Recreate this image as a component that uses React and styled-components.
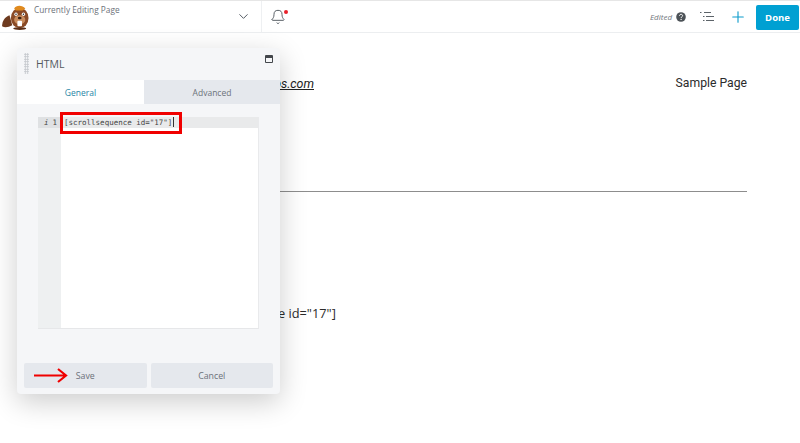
import React from 'react'
import styled, { createGlobalStyle } from 'styled-components'
import { ChevronDown, Bell, Plus } from 'lucide-react'

const Global = createGlobalStyle`
  html, body {
    margin: 0;
    padding: 0;
    background: #fff;
    font-family: "Open Sans", "Liberation Sans", sans-serif;
    overflow: hidden;
  }
`

const Page = styled.div`
  position: relative;
  width: 800px;
  height: 443px;
  overflow: hidden;
`

const TopBar = styled.header`
  height: 31px;
  display: flex;
  align-items: stretch;
  border-top: 1px solid #e6e6e6;
  border-bottom: 1px solid #eceef0;
  box-sizing: content-box;
`

const Brand = styled.div`
  width: 261px;
  display: flex;
  border-right: 1px solid #eef0f2;
  position: relative;
`

const Logo = styled.svg`
  width: 28px;
  height: 26px;
  margin: 3px 0 0 2px;
  flex: none;
`

const BrandLabel = styled.div`
  flex: 1;
  margin: 3px 0 0 4px;
  font-size: 8.3px;
  line-height: 12px;
  color: #6c7179;
`

const Caret = styled.div`
  display: flex;
  align-items: center;
  margin-right: 10px;
  color: #565d65;
`

const BellWrap = styled.div`
  position: relative;
  width: 18px;
  height: 18px;
  margin: 7px 0 0 8px;
  color: #4f565d;
`

const Dot = styled.span`
  position: absolute;
  top: 2px;
  right: 0;
  width: 4px;
  height: 4px;
  border-radius: 50%;
  background: #e8202a;
`

const Actions = styled.div`
  margin-left: auto;
  display: flex;
  align-items: center;
  padding-right: 1px;
`

const Edited = styled.span`
  font-size: 8px;
  font-style: italic;
  color: #72777d;
  margin-right: 4px;
`

const ListIcon = styled.svg`
  margin: 0 15px 0 14px;
`

const DoneButton = styled.button`
  width: 43px;
  height: 25px;
  margin-left: 9px;
  margin-top: 1px;
  border: 0;
  border-radius: 2px;
  background: #00a0d2;
  color: #fff;
  font: 700 9.5px "Open Sans", sans-serif;
  padding: 0;
`

const Content = styled.main`
  padding: 0 53px;
  color: #2b2b2b;
  font-family: Roboto, "Open Sans", sans-serif;
`

const SiteHeader = styled.div`
  display: flex;
  justify-content: space-between;
  align-items: center;
  padding-top: 40px;
  height: 20px;
`

const SiteTitle = styled.a`
  width: 261px;
  text-align: right;
  font-size: 12.4px;
  font-style: italic;
  text-decoration: underline;
  color: #222;
`

const NavLink = styled.span`
  font-size: 12.2px;
  color: #2b2b2b;
`

const Rule = styled.hr`
  border: 0;
  border-top: 1px solid #8d8d8d;
  margin: 98px 0 0;
`

const Shortcode = styled.p`
  margin: 112px 0 0 139px;
  font-family: "Open Sans", sans-serif;
  font-size: 12.8px;
  line-height: 18px;
  color: #2b2b2b;
`

const Panel = styled.section`
  position: absolute;
  left: 17px;
  top: 48px;
  width: 263px;
  height: 346px;
  display: flex;
  flex-direction: column;
  background: #f5f6f8;
  border-radius: 4px;
  box-shadow: 0 8px 28px rgba(0, 0, 0, 0.2);
`

const PanelHead = styled.div`
  height: 32px;
  display: flex;
  align-items: center;
  position: relative;
  padding-left: 19px;
  font-size: 10.5px;
  color: #54595f;
`

const Grip = styled.span`
  position: absolute;
  left: 7px;
  top: 5px;
  width: 5px;
  height: 21px;
  background-image: radial-gradient(#c3c7cc 1px, transparent 1px);
  background-size: 2.5px 2.5px;
`

const MaxIcon = styled.span`
  position: absolute;
  right: 7px;
  top: 7px;
  width: 6px;
  height: 4px;
  border: 1px solid #43474c;
  border-top-width: 3px;
  border-radius: 1px;
`

const Tabs = styled.div`
  height: 24px;
  display: flex;
`

const Tab = styled.div`
  width: ${p => (p.$active ? '127px' : '136px')};
  display: flex;
  align-items: center;
  justify-content: center;
  font-size: 8.5px;
  background: ${p => (p.$active ? '#fff' : '#e5e8ed')};
  color: ${p => (p.$active ? '#1f86a6' : '#6c727a')};
`

const EditorArea = styled.div`
  position: relative;
  flex: 1;
  margin: 13px 21px 34px 21px;
  display: flex;
  border-bottom: 1px solid #e6e7e9;
  border-right: 1px solid #e9eaec;
  background: #fff;
`

const Gutter = styled.div`
  width: 23px;
  background: #eef0f1;
`

const GutterLine = styled.div`
  height: 11px;
  background: #dfe1e3;
  font: 7.5px/11px "DejaVu Sans Mono", monospace;
  color: #444;
  display: flex;
  justify-content: space-between;
  padding: 0 4px 0 6px;
`

const CodeCol = styled.div`
  flex: 1;
`

const CodeLine = styled.div`
  height: 11px;
  padding-left: 3px;
  background: #e9eaeb;
  font: 7.5px/11px "DejaVu Sans Mono", monospace;
  color: #444;
  white-space: pre;
`

const Cursor = styled.span`
  display: inline-block;
  width: 1px;
  height: 10px;
  margin-left: 1px;
  vertical-align: top;
  background: #333;
`

const Highlight = styled.div`
  position: absolute;
  left: 22px;
  top: -5px;
  width: 122px;
  height: 22px;
  box-sizing: border-box;
  border: 3px solid #f00000;
`

const ButtonRow = styled.div`
  position: relative;
  display: flex;
  gap: 4px;
  padding: 0 7px 6px;
`

const PanelButton = styled.button`
  flex: 1;
  height: 25px;
  border: 0;
  border-radius: 2px;
  background: #e5e8ed;
  color: #6c717a;
  font: 500 8.8px "Open Sans", sans-serif;
  padding: 0;
`

const Arrow = styled.svg`
  position: absolute;
  left: 17px;
  top: 5px;
`

const BeaverLogo = () => (
  <Logo viewBox="0 0 30 28">
    <path d="M0 24c0-6 3-10 8-12l3 11c-4 2-8 3-11 1z" fill="#6e3b1f" />
    <ellipse cx="19" cy="15" rx="9.5" ry="11" fill="#8a4a26" />
    <path d="M13 5c2-4 9-4 12 0l-3 2h-7z" fill="#e08a1e" />
    <circle cx="15" cy="11" r="1.8" fill="#fff" />
    <circle cx="23" cy="11" r="1.8" fill="#fff" />
    <circle cx="15" cy="11" r="0.8" fill="#222" />
    <circle cx="23" cy="11" r="0.8" fill="#222" />
    <ellipse cx="19" cy="17" rx="6" ry="5" fill="#c98d5e" />
    <rect x="16.5" y="18" width="5" height="6" rx="1" fill="#fff" />
    <ellipse cx="19" cy="15" rx="2" ry="1.3" fill="#3a1e10" />
    <ellipse cx="19" cy="26.5" rx="7" ry="1.5" fill="#5c2f17" />
  </Logo>
)

const HelpIcon = () => (
  <svg width="10" height="10" viewBox="0 0 10 10">
    <circle cx="5" cy="5" r="4.8" fill="#4c5257" />
    <path d="M3.5 3.8c0-2 3.1-2 3.1-.1 0 1.1-1.5 1.1-1.5 2.3" fill="none" stroke="#fff" strokeWidth="1" />
    <circle cx="5.1" cy="7.4" r=".65" fill="#fff" />
  </svg>
)

const OutlineIcon = () => (
  <ListIcon width="14" height="11" viewBox="0 0 14 11" fill="none" stroke="#5c6369" strokeWidth="1">
    <path d="M0 1.5h1.5M4 1.5h7M3 5.5h1.5M6 5.5h8M3 9.5h1.5M6 9.5h8" />
  </ListIcon>
)

export default function App() {
  return (
    <Page>
      <Global />
      <TopBar>
        <Brand>
          <BeaverLogo />
          <BrandLabel>Currently Editing Page</BrandLabel>
          <Caret>
            <ChevronDown size={15} strokeWidth={1.6} />
          </Caret>
        </Brand>
        <BellWrap>
          <Bell size={16} strokeWidth={1.4} />
          <Dot />
        </BellWrap>
        <Actions>
          <Edited>Edited</Edited>
          <HelpIcon />
          <OutlineIcon />
          <Plus size={18} strokeWidth={1.5} color="#0d9ccb" />
          <DoneButton>Done</DoneButton>
        </Actions>
      </TopBar>
      <Content>
        <SiteHeader>
          <SiteTitle>wpthemesteps.com</SiteTitle>
          <NavLink>Sample Page</NavLink>
        </SiteHeader>
        <Rule />
        <Shortcode>[scrollsequence id="17"]</Shortcode>
      </Content>
      <Panel>
        <PanelHead>
          <Grip />
          HTML
          <MaxIcon />
        </PanelHead>
        <Tabs>
          <Tab $active>General</Tab>
          <Tab>Advanced</Tab>
        </Tabs>
        <EditorArea>
          <Gutter>
            <GutterLine>
              <i>i</i>
              <span>1</span>
            </GutterLine>
          </Gutter>
          <CodeCol>
            <CodeLine>[scrollsequence id="17"]<Cursor /></CodeLine>
          </CodeCol>
          <Highlight />
        </EditorArea>
        <ButtonRow>
          <PanelButton>Save</PanelButton>
          <PanelButton>Cancel</PanelButton>
          <Arrow width="34" height="16" viewBox="0 0 34 16" fill="none" stroke="#f00000" strokeWidth="2.2">
            <path d="M0 7.5h32M24 1l8 6.5-8 6.5" />
          </Arrow>
        </ButtonRow>
      </Panel>
    </Page>
  )
}
